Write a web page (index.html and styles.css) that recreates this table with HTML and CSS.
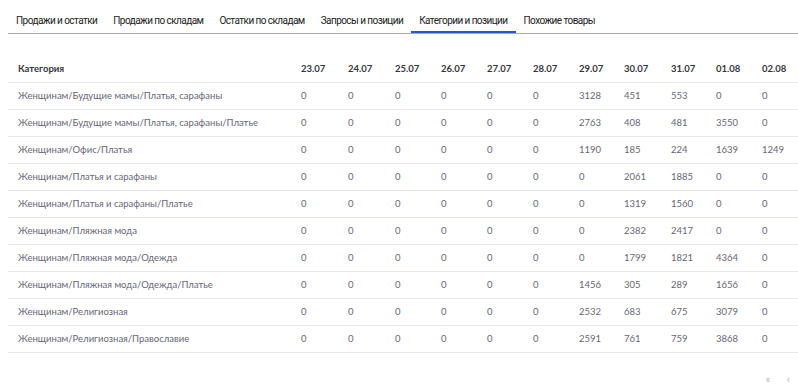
FILE: index.html
```html
<!DOCTYPE html>
<html lang="ru">
<head>
    <meta charset="UTF-8">
    <title>Категории и позиции</title>
    <link rel="stylesheet" href="styles.css">
</head>
<body>
    <div class="tabs">
        <a href="#" class="tab">Продажи и остатки</a>
        <a href="#" class="tab">Продажи по складам</a>
        <a href="#" class="tab">Остатки по складам</a>
        <a href="#" class="tab">Запросы и позиции</a>
        <a href="#" class="tab active">Категории и позиции</a>
        <a href="#" class="tab">Похожие товары</a>
    </div>

    <table class="data-table">
        <colgroup>
            <col class="col-name">
            <col style="width: 47px">
            <col style="width: 47px">
            <col style="width: 46px">
            <col style="width: 46px">
            <col style="width: 46px">
            <col style="width: 46px">
            <col style="width: 45px">
            <col style="width: 47px">
            <col style="width: 45px">
            <col style="width: 46px">
            <col style="width: 46px">
        </colgroup>
        <thead>
            <tr>
                <th>Категория</th>
                <th>23.07</th><th>24.07</th><th>25.07</th><th>26.07</th><th>27.07</th><th>28.07</th>
                <th>29.07</th><th>30.07</th><th>31.07</th><th>01.08</th><th>02.08</th>
            </tr>
        </thead>
        <tbody id="rows"></tbody>
    </table>

    <div class="pager">
        <span class="pager-btn">&laquo;</span>
        <span class="pager-btn">&lsaquo;</span>
    </div>

    <script>
        // Category rows
        const rows = [
            ['Женщинам/Будущие мамы/Платья, сарафаны', 0, 0, 0, 0, 0, 0, 3128, 451, 553, 0, 0],
            ['Женщинам/Будущие мамы/Платья, сарафаны/Платье', 0, 0, 0, 0, 0, 0, 2763, 408, 481, 3550, 0],
            ['Женщинам/Офис/Платья', 0, 0, 0, 0, 0, 0, 1190, 185, 224, 1639, 1249],
            ['Женщинам/Платья и сарафаны', 0, 0, 0, 0, 0, 0, 0, 2061, 1885, 0, 0],
            ['Женщинам/Платья и сарафаны/Платье', 0, 0, 0, 0, 0, 0, 0, 1319, 1560, 0, 0],
            ['Женщинам/Пляжная мода', 0, 0, 0, 0, 0, 0, 0, 2382, 2417, 0, 0],
            ['Женщинам/Пляжная мода/Одежда', 0, 0, 0, 0, 0, 0, 0, 1799, 1821, 4364, 0],
            ['Женщинам/Пляжная мода/Одежда/Платье', 0, 0, 0, 0, 0, 0, 1456, 305, 289, 1656, 0],
            ['Женщинам/Религиозная', 0, 0, 0, 0, 0, 0, 2532, 683, 675, 3079, 0],
            ['Женщинам/Религиозная/Православие', 0, 0, 0, 0, 0, 0, 2591, 761, 759, 3868, 0]
        ];

        document.getElementById('rows').innerHTML = rows
            .map(r => '<tr>' + r.map(v => `<td>${v}</td>`).join('') + '</tr>')
            .join('');
    </script>
</body>
</html>
```

FILE: styles.css
```css
:root {
    --text-dark: #35343f;
    --text-muted: #676675;
    --line-color: #e3e7ee;
    --tab-line: #a9a9a9;
    --accent-color: #1f57d6;
}

* {
    margin: 0;
    padding: 0;
    box-sizing: border-box;
}

body {
    margin: 0 0 0 8px;
    background-color: white;
    font-family: 'Lato', 'Open Sans', sans-serif;
    overflow: hidden;
}

.tabs {
    display: flex;
    margin-top: 7px;
    border-bottom: 1px solid var(--tab-line);
    height: 27px;
}

.tab {
    display: block;
    padding: 0 8px;
    height: 26px;
    line-height: 27px;
    font-family: 'Roboto', Arial, sans-serif;
    font-size: 10px;
    letter-spacing: -0.56px;
    color: #222;
    text-decoration: none;
}

.tab.active {
    border-bottom: 2px solid var(--accent-color);
}

.data-table {
    margin-top: 21px;
    border-collapse: collapse;
    table-layout: fixed;
    width: 790px;
}

.col-name {
    width: 283px;
}

.data-table th,
.data-table td {
    height: 27px;
    padding: 0 0 0 10px;
    text-align: left;
    font-size: 9.5px;
    white-space: nowrap;
    border-bottom: 1px solid var(--line-color);
}

.data-table th {
    font-weight: 700;
    color: var(--text-dark);
}

.data-table td {
    color: var(--text-muted);
}

.pager {
    display: flex;
    justify-content: flex-end;
    gap: 16px;
    margin-top: 18px;
    padding-right: 8px;
}

.pager-btn {
    color: #b9bcc4;
    font-size: 12px;
}
```
